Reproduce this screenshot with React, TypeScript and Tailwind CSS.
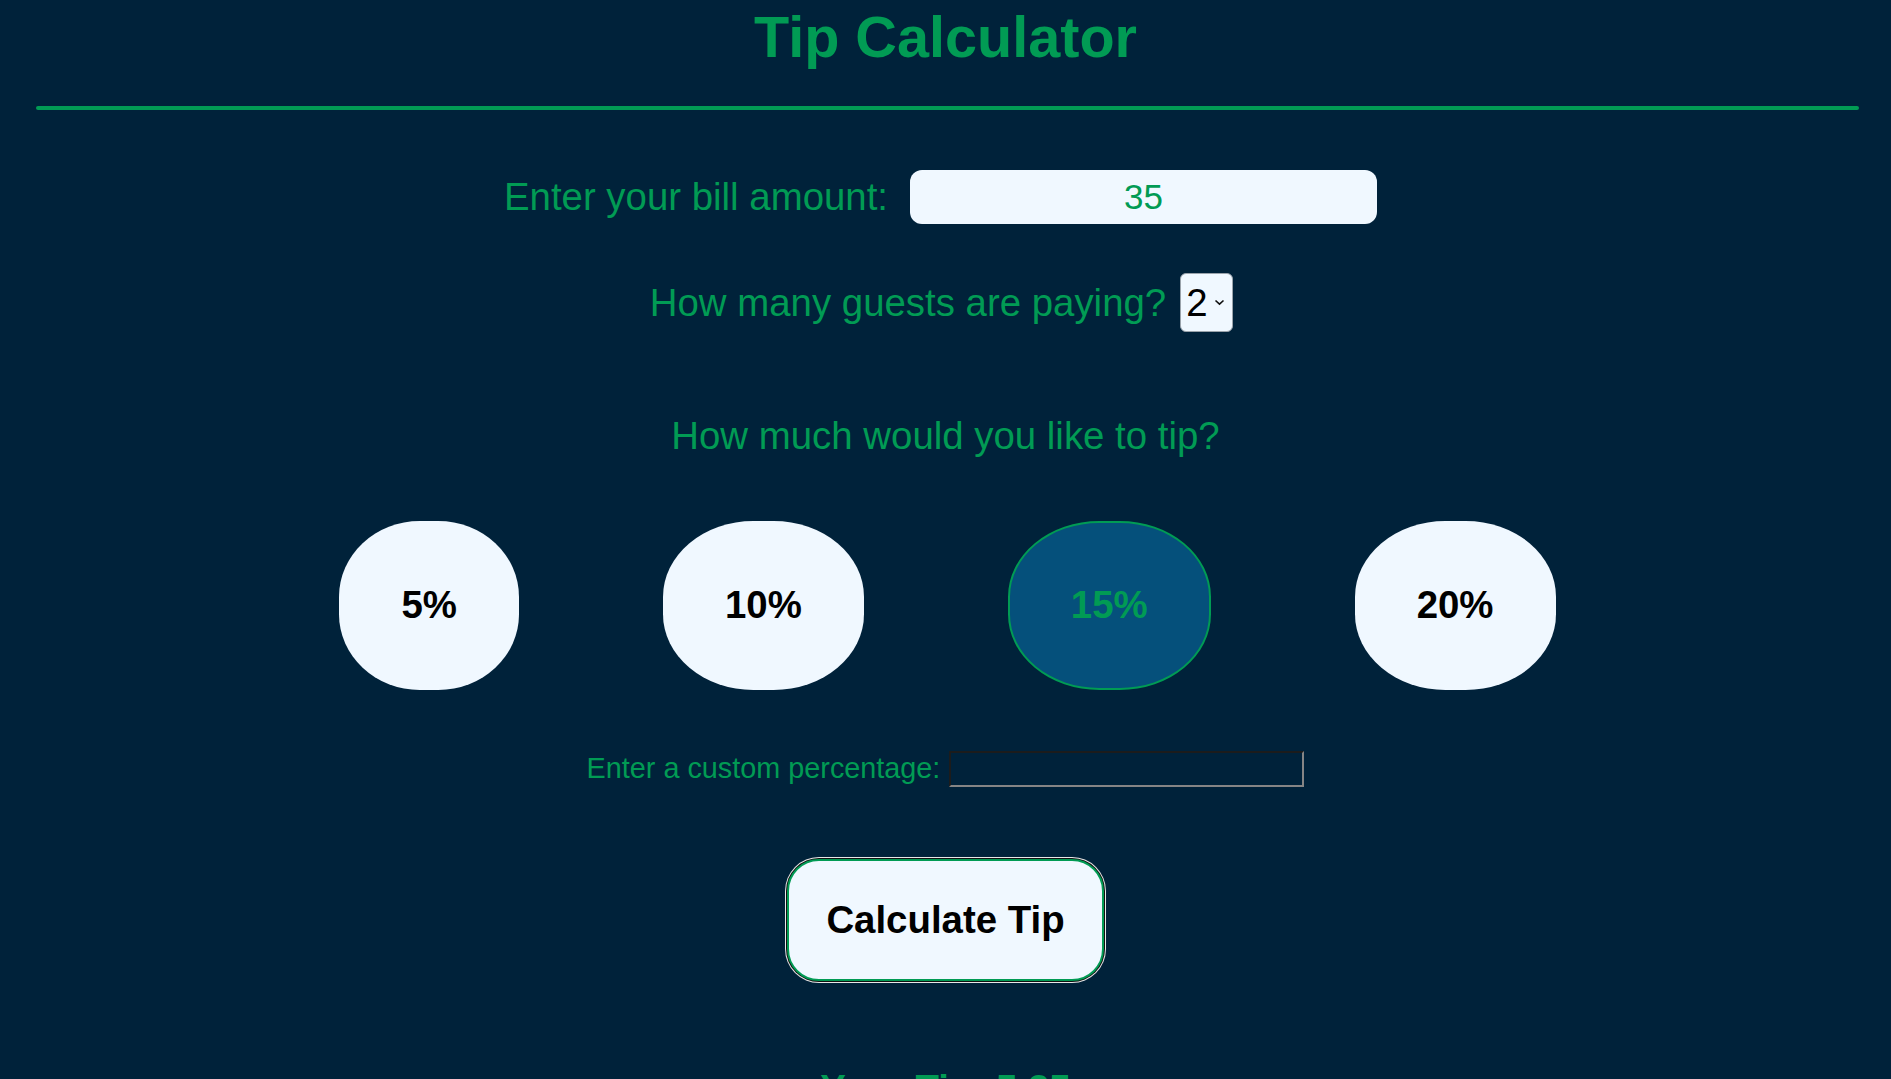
import React from "react";

const font = { fontFamily: '"Liberation Sans", Arial, sans-serif' };

export default function App() {
  const tips = ["5%", "10%", "15%", "20%"];
  return (
    <div
      className="min-h-screen w-full bg-[#00223a] overflow-hidden"
      style={font}
    >
      <h1 className="pt-[4px] text-center text-[57.6px] font-bold leading-[1.15] text-[#019b54]">
        Tip Calculator
      </h1>
      <div className="ml-[36px] mr-[32px] mt-[36px] h-[4px] rounded-full bg-[#019b54]" />

      <div className="mt-[60px] flex items-center justify-center gap-[22px] pr-[10px]">
        <label className="text-[38.4px] leading-[1.15] text-[#019b54]">
          Enter your bill amount:
        </label>
        <input
          type="text"
          defaultValue="35"
          className="h-[54px] w-[467px] rounded-[12px] bg-[#f0f8ff] text-center text-[35px] text-[#019b54] outline-none"
          style={font}
        />
      </div>

      <div className="mt-[49px] flex items-center justify-center gap-[14px] pr-[8px]">
        <label className="text-[38.4px] leading-[1.15] text-[#019b54]">
          How many guests are paying?
        </label>
        <div className="relative flex h-[59px] w-[53px] items-center rounded-[6px] border border-[#9aa3ab] bg-[#f0f8ff] pl-[5px]">
          <span className="text-[38.4px] leading-none text-black">2</span>
          <svg
            className="absolute left-[33px] top-[25px]"
            width="11"
            height="7"
            viewBox="0 0 11 7"
            fill="none"
          >
            <path d="M1.5 1.5 L5.5 5.2 L9.5 1.5" stroke="#111" strokeWidth="1.6" />
          </svg>
        </div>
      </div>

      <p className="mt-[82px] text-center text-[38.4px] leading-[1.15] text-[#019b54]">
        How much would you like to tip?
      </p>

      <div className="mt-[63px] flex items-center justify-center gap-[144px] pl-[4px]">
        {tips.map((t) =>
          t === "15%" ? (
            <button
              key={t}
              className="rounded-[45%] border-2 border-[#019b54] bg-[#05507b] px-[61px] py-[60px] text-[38.4px] font-bold leading-[1.15] text-[#019b54]"
              style={font}
            >
              {t}
            </button>
          ) : (
            <button
              key={t}
              className="rounded-[45%] bg-[#f0f8ff] px-[62px] py-[62px] text-[38.4px] font-bold leading-[1.15] text-black"
              style={font}
            >
              {t}
            </button>
          )
        )}
      </div>

      <div className="mt-[61px] flex items-center justify-center gap-[9px]">
        <label className="text-[28.8px] leading-[1.15] text-[#019b54]">
          Enter a custom percentage:
        </label>
        <input
          type="text"
          className="h-[36px] w-[355px] border-2 border-t-[#1c1c1c] border-l-[#1c1c1c] border-b-[#858585] border-r-[#858585] bg-transparent outline-none"
        />
      </div>

      <div className="mt-[72px] flex justify-center">
        <button
          className="rounded-[32px] border-2 border-[#019b54] bg-[#f0f8ff] px-[37px] py-[37px] text-[38.4px] font-bold leading-[1.15] text-black shadow-[0_0_0_1px_#101010,0_0_0_2px_#e8e8e8]"
          style={font}
        >
          Calculate Tip
        </button>
      </div>

      <p className="mt-[86px] text-center text-[38.4px] font-bold leading-[1.15] text-[#019b54]">
        Your Tip: 5.25
      </p>
    </div>
  );
}
